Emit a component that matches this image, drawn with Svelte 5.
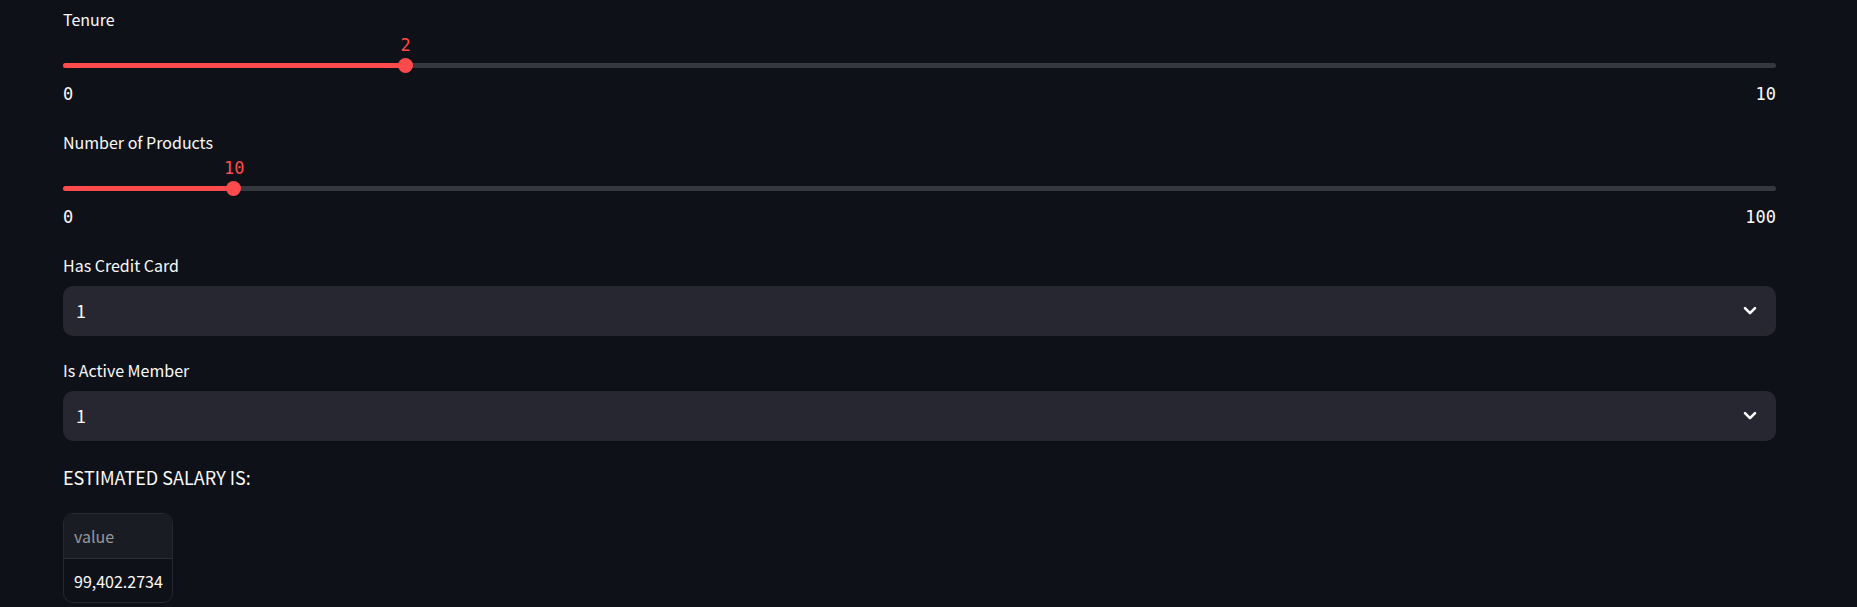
<script>
  let sliders = $state([
    { id: 'tenure', label: 'Tenure', min: 0, max: 10, value: 2 },
    { id: 'products', label: 'Number of Products', min: 0, max: 100, value: 10 },
  ]);

  let selects = $state([
    { id: 'credit-card', label: 'Has Credit Card', value: '1' },
    { id: 'active-member', label: 'Is Active Member', value: '1' },
  ]);

  const percent = (s) => ((s.value - s.min) / (s.max - s.min)) * 100;
</script>

<main>
  {#each sliders as s (s.id)}
    <div class="field slider">
      <label for={s.id}>{s.label}</label>
      <div class="value-row">
        <output for={s.id} style="left: {percent(s)}%">{s.value}</output>
      </div>
      <div class="control">
        <div class="track"><div class="fill" style="width: {percent(s)}%"></div></div>
        <input id={s.id} type="range" min={s.min} max={s.max} bind:value={s.value} />
      </div>
      <div class="limits"><span>{s.min}</span><span>{s.max}</span></div>
    </div>
  {/each}

  {#each selects as s (s.id)}
    <div class="field">
      <label for={s.id}>{s.label}</label>
      <div class="select">
        <select id={s.id} bind:value={s.value}>
          <option value="1">1</option>
          <option value="0">0</option>
        </select>
        <svg viewBox="0 0 14 10" aria-hidden="true"><path d="M2 2.2 L7 7.2 L12 2.2" /></svg>
      </div>
    </div>
  {/each}

  <p>ESTIMATED SALARY IS:</p>

  <div class="frame">
    <table>
      <thead><tr><th scope="col">value</th></tr></thead>
      <tbody><tr><td>99,402.2734</td></tr></tbody>
    </table>
  </div>
</main>

<style>
  :global(body) {
    background: #0e1117;
  }

  main {
    display: flex;
    flex-direction: column;
    gap: 22px;
    padding: 7px 81px 4px 63px;
    color: #fafafa;
    font-family: 'Noto Sans CJK SC', 'Noto Sans', sans-serif;
    font-size: 16px;
    line-height: 24px;
  }

  .field {
    display: flex;
    flex-direction: column;
  }

  .slider {
    padding-bottom: 2px;
  }

  .value-row {
    position: relative;
    height: 24px;
    line-height: 28px;
  }

  output,
  .limits {
    font-family: 'DejaVu Sans Mono', monospace;
    font-size: 17px;
  }

  output {
    position: absolute;
    transform: translateX(-50%);
    color: #ff4b4b;
  }

  .control {
    display: grid;
    align-items: center;
    height: 20px;
  }

  .track,
  .control input {
    grid-area: 1 / 1;
  }

  .track {
    height: 5px;
    border-radius: 4px;
    background: #36383f;
    overflow: hidden;
  }

  .fill {
    height: 100%;
    background: #ff4b4b;
  }

  .control input {
    appearance: none;
    width: calc(100% + 16px);
    height: 15px;
    margin: 0 -8px;
    background: transparent;
    cursor: pointer;
  }

  .control input::-webkit-slider-thumb {
    appearance: none;
    width: 15px;
    height: 15px;
    border-radius: 50%;
    background: #ff4b4b;
  }

  .limits {
    display: flex;
    justify-content: space-between;
    padding-top: 7px;
  }

  .select {
    display: grid;
    align-items: center;
    margin-top: 9px;
  }

  select,
  .select svg {
    grid-area: 1 / 1;
  }

  select {
    appearance: none;
    width: 100%;
    height: 50px;
    padding: 0 48px 2px 13px;
    border: 0;
    border-radius: 10px;
    background: #262730;
    color: inherit;
    font-family: inherit;
    font-size: 18px;
  }

  .select svg {
    justify-self: end;
    width: 14px;
    height: 10px;
    margin-right: 19px;
    pointer-events: none;
    fill: none;
    stroke: #fafafa;
    stroke-width: 2.6;
    stroke-linecap: round;
    stroke-linejoin: round;
  }

  p {
    margin: 0;
    font-size: 18px;
    line-height: 28px;
  }

  .frame {
    align-self: flex-start;
    border: 1px solid #262730;
    border-radius: 10px;
    overflow: hidden;
  }

  table {
    border-collapse: collapse;
  }

  th,
  td {
    height: 44px;
    padding: 0 9px 0 10px;
    text-align: left;
    font-weight: 400;
  }

  td {
    height: 43px;
  }

  th {
    border-bottom: 1px solid #2c2e35;
    background: #1a1c23;
    color: #97989c;
  }
</style>
